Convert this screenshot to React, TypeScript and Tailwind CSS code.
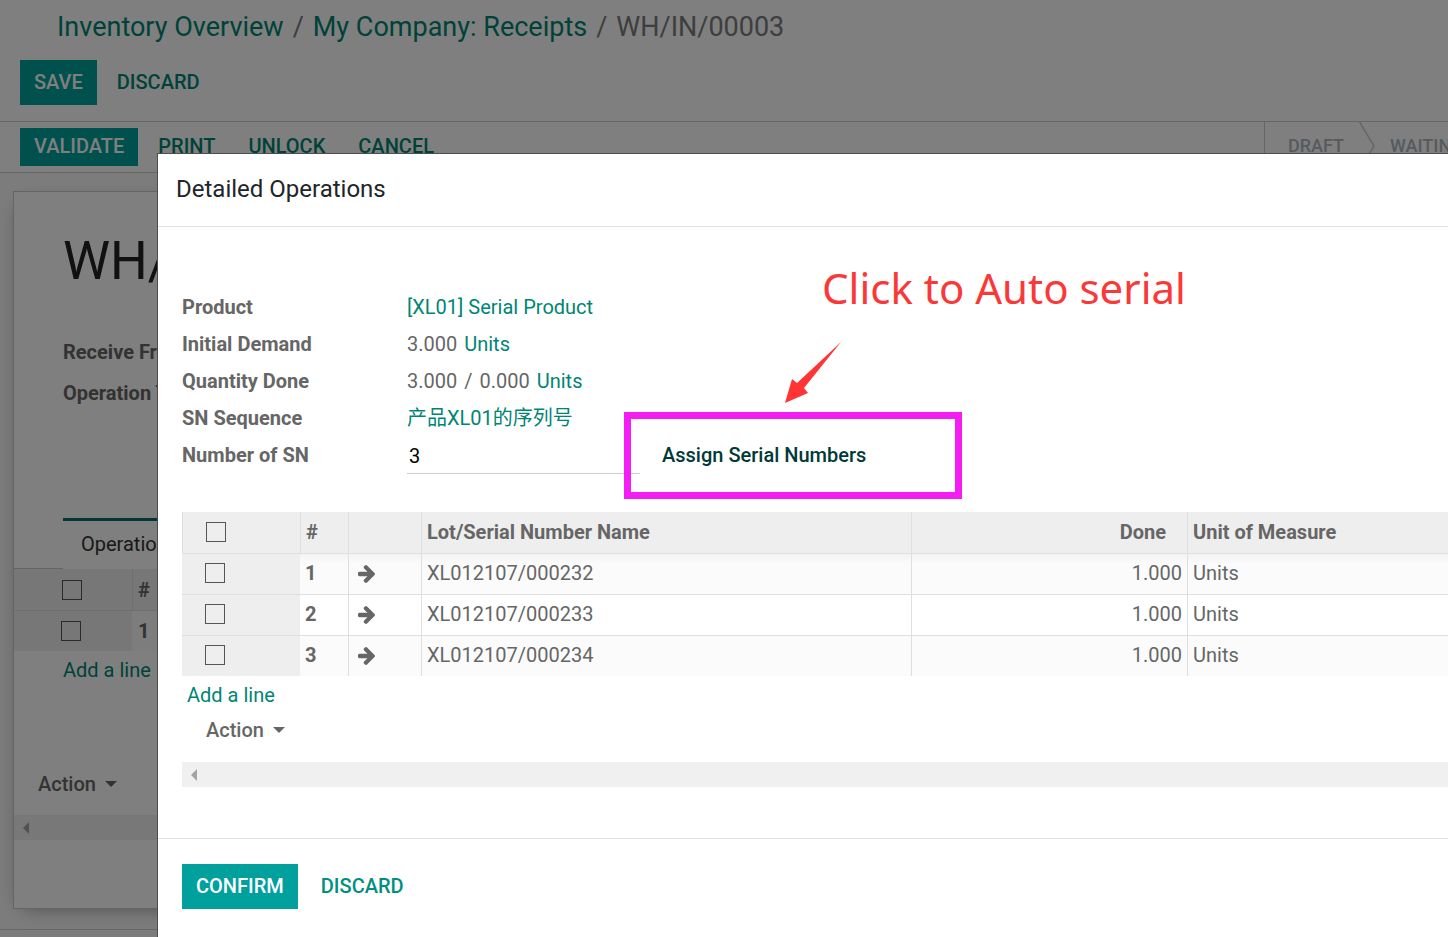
const lots = [
  { id: 1, name: 'XL012107/000232', done: '1.000', uom: 'Units' },
  { id: 2, name: 'XL012107/000233', done: '1.000', uom: 'Units' },
  { id: 3, name: 'XL012107/000234', done: '1.000', uom: 'Units' },
]

function Check({ label }: { label: string }) {
  return (
    <input
      type="checkbox"
      aria-label={label}
      className="block size-5 appearance-none border border-[#555555] bg-transparent checked:bg-[#00a09d]"
    />
  )
}

function Caret() {
  return (
    <svg width="12" height="6" viewBox="0 0 12 6" aria-hidden="true">
      <path d="M0 0h12L6 6z" fill="currentColor" />
    </svg>
  )
}

function ArrowRight() {
  return (
    <svg width="17" height="18" viewBox="192 181 1472 1558" fill="currentColor" aria-hidden="true">
      <path d="M1664 960q0 54-37 91l-651 651q-39 37-91 37-51 0-90-37l-75-75q-38-38-38-91t38-91l293-293h-704q-52 0-84.5-37.5t-32.5-90.5v-128q0-53 32.5-90.5t84.5-37.5h704l-293-294q-38-36-38-90t38-90l75-75q38-38 90-38 53 0 91 38l651 651q37 35 37 90z" />
    </svg>
  )
}

function ScrollTrack() {
  return (
    <div className="flex h-[25px] items-center bg-[#f0f0f0] pl-[9px]">
      <svg width="6" height="12" viewBox="0 0 6 12" aria-hidden="true">
        <path d="M6 0v12L0 6z" fill="#a3a3a3" />
      </svg>
    </div>
  )
}

function ReceiptPage() {
  return (
    <div className="min-h-screen bg-[#f9f9f9]">
      <header className="bg-white">
        <nav className="flex h-[60px] items-start gap-[9px] pt-2 pl-[57px] text-[27px] leading-[38px] whitespace-nowrap text-[#7c7c7c]">
          <a href="#inventory" className="text-[#008573]">Inventory Overview</a>
          <span>/</span>
          <a href="#receipts" className="text-[#008573]">My Company: Receipts</a>
          <span>/</span>
          <span>WH/IN/00003</span>
        </nav>
        <div className="flex h-[61px] items-start pl-5 font-medium">
          <button className="h-[45px] bg-[#00a09d] px-[14px] pb-[2px] text-white">SAVE</button>
          <button className="h-[45px] px-5 pb-[2px] text-[#008573]">DISCARD</button>
        </div>
      </header>

      <div className="flex h-[52px] items-stretch border-y border-[#cccccc] bg-white font-medium">
        <div className="flex flex-1 items-center pl-5">
          <button className="h-[38px] bg-[#00a09d] px-[14px] pb-[2px] text-white">VALIDATE</button>
          <button className="h-[38px] pb-[2px] pl-5 text-[#008573]">PRINT</button>
          <button className="h-[38px] pb-[2px] pl-[33px] text-[#008573]">UNLOCK</button>
          <button className="h-[38px] pb-[2px] pl-[33px] text-[#008573]">CANCEL</button>
        </div>
        <div className="flex w-[184px] items-center overflow-hidden border-l border-[#cccccc] pb-[2px] pl-[23px] text-lg text-[#adb5bd]">
          <span>DRAFT</span>
          <svg width="18" height="50" viewBox="0 0 18 50" fill="none" className="mx-[14px] shrink-0" aria-hidden="true">
            <path d="M1 0l15 25L1 50" stroke="#cccccc" strokeWidth="1.5" />
          </svg>
          <span>WAITING</span>
        </div>
      </div>

      <div className="border-b border-[#cccccc] pt-[18px] pb-5 pl-[13px]">
        <div className="border border-[#c8c8d3] bg-white pb-[68px] shadow-[0_5px_20px_-10px_rgba(0,0,0,0.6)]">
          <h1 className="h-[140px] pt-10 pl-[49px] text-[53px] leading-[58px] text-[#222222]">WH/IN/00003</h1>
          <dl className="h-[186px] pl-[49px] font-bold">
            <dt className="h-[41px] leading-[41px]">Receive From</dt>
            <dt className="h-[41px] leading-[41px]">Operation Type</dt>
          </dl>
          <div className="flex">
            <div className="w-[49px] border-b border-[#c8c8c8]" />
            <button className="h-[51px] border-t-3 border-[#007060] px-[18px] pb-[2px] text-[#333333]">Operations</button>
            <div className="flex-1 border-t-3 border-[#007060]" />
          </div>
          <table className="w-full table-fixed border-separate border-spacing-0 text-left">
            <thead>
              <tr className="h-[42px] bg-[#eeeeee]">
                <th className="w-[118px] border-b border-[#dfdfdf] pl-12"><Check label="Select all operations" /></th>
                <th className="border-b border-l border-[#dfdfdf] pl-[5px]">#</th>
              </tr>
            </thead>
            <tbody>
              <tr className="h-10">
                <td className="bg-[#eeeeee] pl-[47px]"><Check label="Select operation 1" /></td>
                <td className="bg-[#fbfbfb] pl-1.5 font-bold">1</td>
              </tr>
            </tbody>
          </table>
          <a href="#add-operation" className="block h-[38px] pl-[49px] leading-[38px] text-[#008573]">Add a line</a>
          <button className="mt-[76px] mb-3 flex h-[38px] items-center gap-[9px] pl-6 font-medium">
            Action <Caret />
          </button>
          <ScrollTrack />
        </div>
      </div>
    </div>
  )
}

function OperationsDialog() {
  return (
    <section
      role="dialog"
      aria-labelledby="dialog-title"
      className="relative min-h-[calc(100vh-153px)] border-t border-l border-[#4d4d4d] bg-white"
    >
      <h2 id="dialog-title" className="h-[73px] border-b border-[#e0e0e0] pl-[18px] text-2xl leading-[70px] text-[#212529]">
        Detailed Operations
      </h2>

      <div className="h-[611px] pt-[61px] pl-6">
        <div className="grid auto-rows-[37px] grid-cols-[225px_1fr] items-center">
          <span className="font-bold">Product</span>
          <a href="#product" className="text-[#008573]">[XL01] Serial Product</a>

          <span className="font-bold">Initial Demand</span>
          <span className="flex gap-[7px]">
            3.000 <a href="#uom" className="text-[#008573]">Units</a>
          </span>

          <span className="font-bold">Quantity Done</span>
          <span className="flex gap-[7px]">
            <span>3.000</span>
            <span>/</span>
            <span>0.000</span>
            <a href="#uom" className="text-[#008573]">Units</a>
          </span>

          <span className="font-bold">SN Sequence</span>
          <a href="#sequence" className="text-[#008573]">产品XL01的序列号</a>

          <label htmlFor="sn-count" className="font-bold">Number of SN</label>
          <div className="flex h-[38px] items-center self-start">
            <input
              id="sn-count"
              type="text"
              defaultValue="3"
              className="h-[38px] w-[233px] border-b border-[#cccccc] pt-[2px] pl-[2px] text-black outline-none"
            />
            <button className="pl-[22px] font-medium text-[#003a38]">Assign Serial Numbers</button>
          </div>
        </div>

        <table className="mt-[39px] w-full table-fixed border-separate border-spacing-0 text-left">
          <thead>
            <tr className="h-[42px] bg-[#eeeeee] [&>th]:border-b [&>th]:border-l [&>th]:border-[#dfdfdf] [&>th]:pb-[2px]">
              <th className="w-[118px] pl-[23px]"><Check label="Select all lots" /></th>
              <th className="w-12 pl-[5px]">#</th>
              <th className="w-[73px]" />
              <th className="w-[490px] pl-[5px]">Lot/Serial Number Name</th>
              <th className="w-[276px] pr-[21px] text-right">Done</th>
              <th className="pl-[5px]">Unit of Measure</th>
            </tr>
          </thead>
          <tbody className="[&>tr:first-child>td:not(:first-child)]:bg-linear-to-b [&>tr:first-child>td:not(:first-child)]:from-[#f3f3f3] [&>tr:first-child>td:not(:first-child)]:to-[#fbfbfb] [&>tr:first-child>td:not(:first-child)]:to-25%">
            {lots.map((lot) => (
              <tr
                key={lot.id}
                className="h-[41px] odd:bg-[#fbfbfb] last:h-10 [&>td]:border-b [&>td]:border-[#dfdfdf] [&>td]:pb-[2px] last:[&>td]:border-b-0"
              >
                <td className="bg-[#eeeeee] pl-[23px]"><Check label={`Select lot ${lot.id}`} /></td>
                <td className="pl-[5px] font-bold">{lot.id}</td>
                <td className="border-l pl-[9px]">
                  <button aria-label={`Open lot ${lot.id}`} className="block pt-[2px]"><ArrowRight /></button>
                </td>
                <td className="border-l pl-[5px]">{lot.name}</td>
                <td className="border-l pr-[5px] text-right">{lot.done}</td>
                <td className="border-l pl-[5px]">{lot.uom}</td>
              </tr>
            ))}
          </tbody>
        </table>
        <a href="#add-lot" className="block h-[35px] pl-[5px] leading-[38px] text-[#008573]">Add a line</a>
        <button className="mb-[13px] flex h-[38px] items-center gap-[9px] pl-6 font-medium">
          Action <Caret />
        </button>
        <ScrollTrack />
      </div>

      <footer className="flex items-center border-t border-[#e0e0e0] pt-[25px] pb-7 pl-6 font-medium">
        <button className="h-[45px] bg-[#00a09d] px-[14px] pb-[2px] text-white">CONFIRM</button>
        <button className="h-[45px] px-[23px] pb-[2px] text-[#009080]">DISCARD</button>
      </footer>

      {/* callout drawn over the dialog */}
      <p className="absolute top-[105px] left-[664px] font-['Noto_Sans',sans-serif] text-[42px] leading-[58px] whitespace-nowrap text-[#fb3838]">
        Click to Auto serial
      </p>
      <svg width="56" height="62" viewBox="0 0 56 62" className="absolute top-[188px] left-[627px]" aria-hidden="true">
        <path d="M56 0L12 41 7 37 0 61 23 51 19 46z" fill="#ff3535" />
      </svg>
      <div className="pointer-events-none absolute top-[258px] left-[466px] h-[87px] w-[338px] border-7 border-[#f41ef4]" />
    </section>
  )
}

export default function App() {
  return (
    <main className="relative min-h-screen overflow-hidden font-[Roboto,'Noto_Sans_CJK_SC',sans-serif] text-[20px] leading-6 text-[#666666]">
      <ReceiptPage />
      <div className="absolute inset-0 overflow-hidden bg-black/50 pt-[153px] pl-[157px]">
        <OperationsDialog />
      </div>
    </main>
  )
}
